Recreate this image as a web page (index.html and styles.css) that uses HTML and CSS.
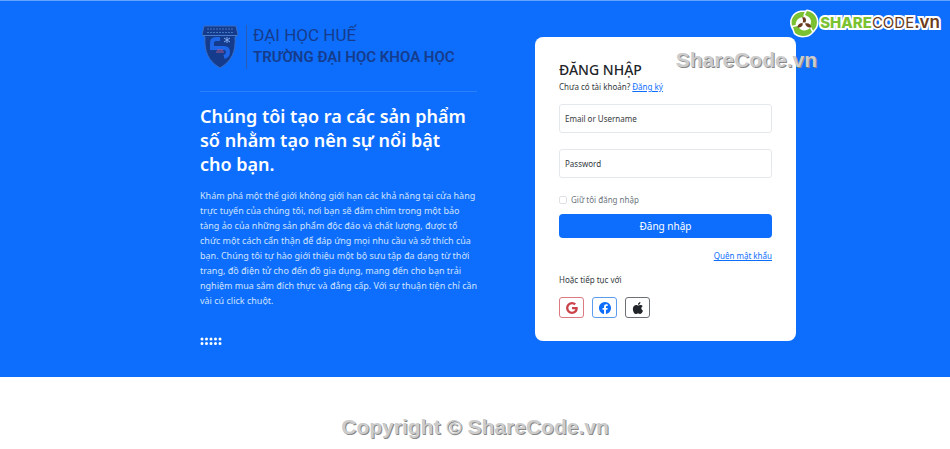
FILE: index.html
```html
<!DOCTYPE html>
<html lang="vi">
<head>
    <meta charset="UTF-8">
    <meta name="viewport" content="width=device-width, initial-scale=1.0">
    <title>Đăng nhập</title>
    <link rel="stylesheet" href="styles.css">
</head>

<body>
    <!-- Logo ShareCode -->
    <div class="brand">
        <svg class="brand-icon" viewBox="0 0 28 28" aria-hidden="true">
            <g fill="#7ac231" stroke="#fff" stroke-width="3" stroke-linejoin="round" paint-order="stroke">
                <circle cx="14" cy="14" r="10" fill="#fff"/>
                <path d="M3 19C-1 11 4 4 11 3h6l-4 5C7 9 5 13 6 18z"/>
                <path d="M17 2c8 1 12 9 9 16l-3 4-4-4c4-5 2-10-4-12z"/>
                <path d="M22 23C18 28 10 28 5 24l-2-6 5-1c2 5 8 6 12 2z"/>
            </g>
            <g fill="#6b3b20">
                <path d="M12 8.500c3-1 5 1 3.500 5h-3c1-2 .5-3-.5-5z"/>
                <path d="M12.500 14c1 3-2 5-5 4.500 0-3 2-4.500 5-4.500z"/>
                <path d="M15 14.500c4-1 6 1 6 4-3 .5-5-1-6-4z"/>
            </g>
        </svg>
        <span class="brand-name"><b>SHARE</b>CODE<span class="brand-vn">.vn</span></span>
    </div>

    <!-- Phần đăng nhập -->
    <section class="login">
        <div class="container">
            <div class="intro">
                <div class="school">
                    <svg class="school-crest" viewBox="0 0 36 44" aria-hidden="true">
                        <path d="M2 1h32l2 9-3 2c1 14-3 24-15 31C6 36 2 26 3 12l-3-2z" fill="#153c8c" stroke="#3b6cc0"/>
                        <path d="M1 10.500h34" stroke="#4b7ccc"/>
                        <path d="M5 4h26M5 7.500h26" stroke="#4576c0" stroke-dasharray="2 1"/>
                        <path d="M18 14h-4q-4 0-4 4v5h12q4 0 4 4t-4 5" fill="none" stroke="#1d66e8" stroke-width="4"/>
                        <path d="M25 12v6M22 13l6 4M28 13l-6 4" stroke="#7faaf0"/>
                        <path d="M15 25h6M14 27h8" stroke="#a5568c"/>
                    </svg>
                    <div class="school-name">
                        <div class="school-top">ĐẠI HỌC HUẾ</div>
                        <div class="school-bottom">TRƯỜNG ĐẠI HỌC KHOA HỌC</div>
                    </div>
                </div>
                <hr class="line">
                <h1 class="title">Chúng tôi tạo ra các sản phẩm số nhằm tạo nên sự nổi bật <br>cho bạn.</h1>
                <p class="lead">Khám phá một thế giới không giới hạn các khả năng tại cửa hàng trực tuyến của chúng tôi, nơi bạn sẽ đắm chìm trong một bảo <br>tàng ảo của những sản phẩm độc đáo và chất lượng, được tổ <br>chức một cách cẩn thận để đáp ứng mọi nhu cầu và sở thích của bạn. Chúng tôi tự hào giới thiệu một bộ sưu tập đa dạng từ thời trang, đồ điện tử cho đến đồ gia dụng, mang đến cho bạn trải nghiệm mua sắm đích thực và đẳng cấp. Với sự thuận tiện chỉ cần vài cú click chuột.</p>
                <svg class="dots" viewBox="0 0 22 8" aria-hidden="true">
                    <path d="M2 2h19M2 6.500h19" stroke="#fff" stroke-width="3" stroke-linecap="round" stroke-dasharray="0 4.500"/>
                </svg>
            </div>

            <div class="card">
                <h2 class="card-title">ĐĂNG NHẬP</h2>
                <p class="card-text">Chưa có tài khoản? <a href="#">Đăng ký</a></p>
                <form>
                    <input class="field" type="text" placeholder="Email or Username" aria-label="Email or Username">
                    <input class="field" type="password" placeholder="Password" aria-label="Password">
                    <div class="remember">
                        <input type="checkbox" id="remember">
                        <label for="remember">Giữ tôi đăng nhập</label>
                    </div>
                    <button class="submit" type="submit">Đăng nhập</button>
                </form>
                <p class="forgot"><a href="#">Quên mật khẩu</a></p>
                <p class="or">Hoặc tiếp tục với</p>
                <div class="social">
                    <button class="social-btn google" type="button" aria-label="Google">
                        <svg viewBox="0 0 16 16"><path d="M15.545 6.558a9.420 9.420 0 0 1 .139 1.626c0 2.434-.87 4.492-2.384 5.885h.002C11.978 15.292 10.158 16 8 16A8 8 0 1 1 8 0a7.689 7.689 0 0 1 5.352 2.082l-2.284 2.284A4.347 4.347 0 0 0 8 3.166c-2.087 0-3.860 1.408-4.492 3.304a4.792 4.792 0 0 0 0 3.063h.003c.635 1.893 2.405 3.301 4.492 3.301 1.078 0 2.004-.276 2.722-.764h-.003a3.702 3.702 0 0 0 1.599-2.431H8v-3.080h7.545z"/></svg>
                    </button>
                    <button class="social-btn facebook" type="button" aria-label="Facebook">
                        <svg viewBox="0 0 16 16"><path d="M16 8.049c0-4.446-3.582-8.050-8-8.050C3.580 0-.002 3.603-.002 8.050c0 4.017 2.926 7.347 6.750 7.951v-5.625h-2.030V8.050H6.750V6.275c0-2.017 1.195-3.131 3.022-3.131.876 0 1.791.157 1.791.157v1.980h-1.009c-.993 0-1.303.621-1.303 1.258v1.510h2.218l-.354 2.326H9.250V16c3.824-.604 6.750-3.934 6.750-7.951z"/></svg>
                    </button>
                    <button class="social-btn apple" type="button" aria-label="Apple">
                        <svg viewBox="0 0 16 16"><path d="M11.200 0c.1 1-.3 1.900-.9 2.600-.6.800-1.500 1.300-2.400 1.200-.1-.9.300-1.900.9-2.500C9.400.6 10.400.1 11.200 0zM14.200 5.500c-2.600 1.700-2.200 5 .5 6.100-.5 1.400-1.700 3.600-2.900 4.200-1.400.5-2-.6-3.600-.6s-2.300 1-3.500.7C2.600 15.400.900 11.900 1.200 8.800 1.500 5.700 3.500 4 5.500 4c1.200 0 2 .8 2.900.8.800 0 1.700-.9 3.300-.8 1 .1 1.900.5 2.500 1.500z"/></svg>
                    </button>
                </div>
                <span class="watermark">ShareCode.vn</span>
            </div>
        </div>
    </section>

    <footer class="copyright">Copyright © ShareCode.vn</footer>
</body>
</html>
```
FILE: styles.css
```css
* {
    box-sizing: border-box;
}
body {
    margin: 0;
    background-color: #fff;
    color: #343a40;
    font-family: "Noto Sans", "Open Sans", sans-serif;
    font-size: 8px;
    line-height: 12px;
}
h1, h2, p {
    margin: 0;
}
a {
    color: #0d6efd;
}

/* Logo ShareCode */
.brand {
    position: absolute;
    top: 8px;
    right: 10px;
    display: flex;
    align-items: center;
    gap: 2px;
}
.brand-icon {
    width: 28px;
    height: 28px;
    overflow: visible;
}
.brand-name {
    color: #6b3b20;
    font-family: Inter, sans-serif;
    font-size: 15px;
    line-height: 28px;
    -webkit-text-stroke: 4px #fff;
    paint-order: stroke fill;
}
.brand-name b {
    color: #7ac231;
    font-weight: 800;
}
.brand-vn {
    font-size: 17px;
    font-weight: 600;
}

/* Phần đăng nhập */
.login {
    padding: 36px 16px 32px;
    border-top: 1px solid #64a3ff;
    background-color: #0d6efd;
}
.container {
    display: flex;
    align-items: flex-start;
    justify-content: space-between;
    max-width: 642px;
    margin: 0 auto;
    padding-left: 46px;
}
.intro {
    width: 277px;
    margin-top: -14px;
}

/* Tên trường */
.school {
    display: flex;
    align-items: center;
    gap: 8px;
    padding: 2px;
    color: #153c8c;
}
.school-crest {
    width: 36px;
    height: 44px;
}
.school-name {
    padding-left: 6px;
    border-left: 1px solid #2a5cb4;
    white-space: nowrap;
}
.school-top {
    font-family: Roboto, sans-serif;
    font-size: 17px;
    line-height: 20px;
}
.school-bottom {
    font-family: Roboto, sans-serif;
    font-size: 15px;
    font-weight: 600;
    line-height: 24px;
}
.line {
    margin: 20px 0 12px;
    border: 0;
    border-top: 1px solid #2b80ff;
}
.title {
    color: #fff;
    font-size: 18px;
    font-weight: 600;
    line-height: 24px;
}
.lead {
    margin: 12px -6px 0 0;
    color: #cfe2ff;
    font-size: 9px;
    line-height: 15px;
}
.dots {
    display: block;
    width: 22px;
    height: 8px;
    margin-top: 29px;
}

/* Khung đăng nhập */
.card {
    position: relative;
    width: 261px;
    padding: 24px 24px 23px;
    border-radius: 8px;
    background-color: #fff;
}
.card-title {
    color: #212529;
    font-size: 14px;
    font-weight: 500;
    line-height: 18px;
}
.card-text {
    margin: 2px 0 11px;
}
.field {
    display: block;
    width: 100%;
    height: 29px;
    margin-bottom: 16px;
    padding: 0 5px;
    border: 1px solid #e5e8eb;
    border-radius: 3px;
    font: inherit;
}
.field::placeholder {
    color: #343a40;
    opacity: 1;
}
.remember {
    display: flex;
    align-items: center;
    gap: 4px;
    margin-bottom: 8px;
    color: #6c757d;
}
.remember input {
    appearance: none;
    width: 8px;
    height: 8px;
    margin: 0;
    border: 1px solid #dee2e6;
    border-radius: 2px;
}
.submit {
    display: block;
    width: 100%;
    height: 24px;
    padding: 0;
    border: 0;
    border-radius: 4px;
    background-color: #0d6efd;
    color: #fff;
    font: inherit;
    font-size: 10px;
}
.forgot {
    margin: 12px 0;
    text-align: right;
}
.social {
    display: flex;
    gap: 8px;
    margin-top: 11px;
}
.social-btn {
    display: flex;
    align-items: center;
    justify-content: center;
    width: 25px;
    height: 21px;
    padding: 0;
    border: 1px solid;
    border-radius: 3px;
    background-color: #fff;
}
.social-btn svg {
    width: 12px;
    height: 12px;
    fill: currentColor;
}
.google {
    border-color: #dc7a82;
    color: #cb444a;
}
.facebook {
    border-color: #5c9ced;
    color: #0d6efd;
}
.apple {
    border-color: #6c7075;
    color: #212529;
}

/* Chữ chìm */
.watermark,
.copyright {
    color: #ccc;
    font-family: "Liberation Sans", Arial, sans-serif;
    font-size: 21px;
    font-weight: 700;
    line-height: 24px;
    text-shadow: 1px 1px 0 #888;
}
.watermark {
    position: absolute;
    top: 11px;
    right: -21px;
}
.copyright {
    padding: 38px 0 8px;
    text-align: center;
}
```
